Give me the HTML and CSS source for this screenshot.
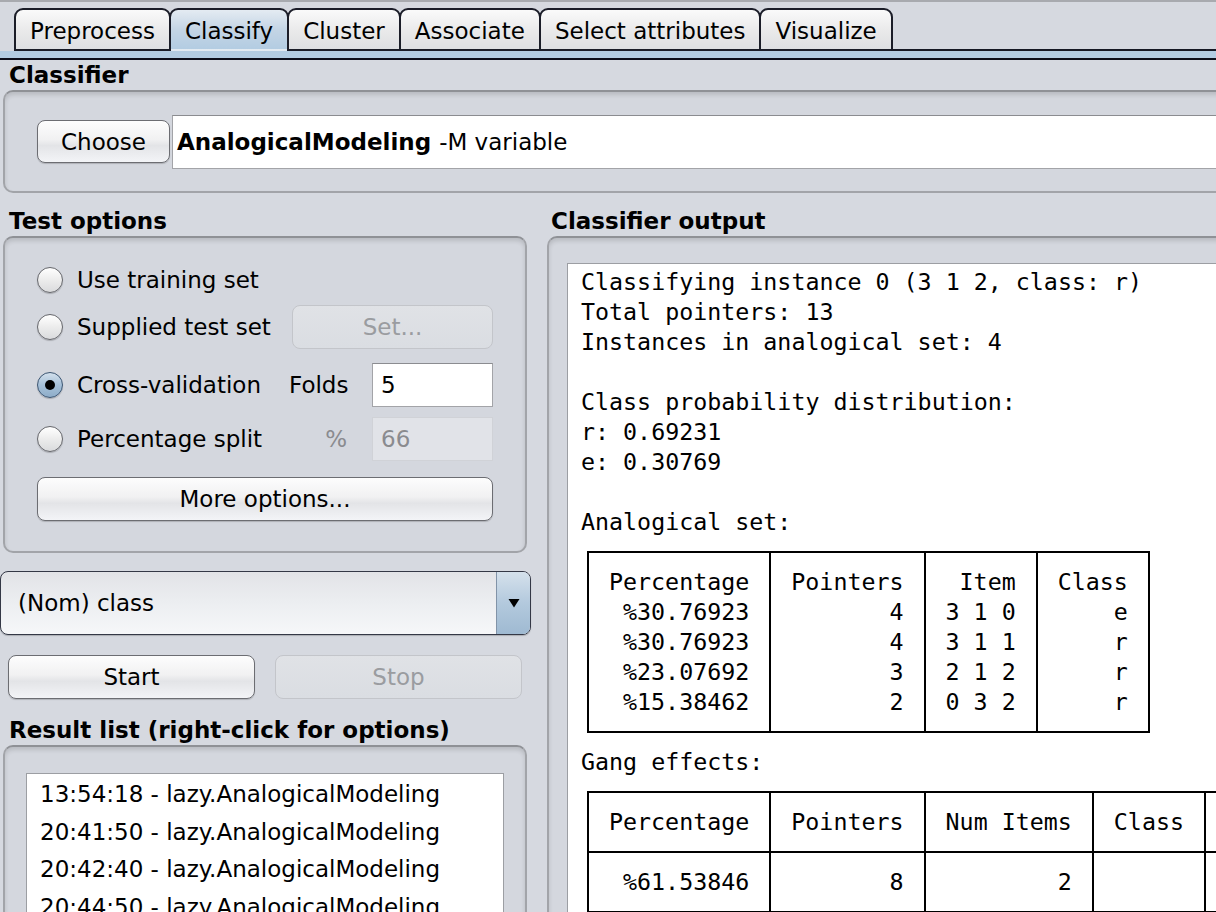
FILE: index.html
```html
<!DOCTYPE html>
<html>
<head>
<meta charset="utf-8">
<title>Weka Explorer - Classify</title>
<link rel="stylesheet" href="styles.css">
</head>
<body>
<div class="window">
  <div class="tabs">
    <div class="tab">Preprocess</div>
    <div class="tab sel">Classify</div>
    <div class="tab">Cluster</div>
    <div class="tab">Associate</div>
    <div class="tab">Select attributes</div>
    <div class="tab">Visualize</div>
  </div>
  <div class="strip"></div>

  <div class="title t-classifier">Classifier</div>
  <div class="panel classifier">
    <div class="btn choose">Choose</div>
    <div class="field cfield"><b>AnalogicalModeling</b> -M variable</div>
  </div>

  <div class="main">
    <div class="left">
      <div class="title">Test options</div>
      <div class="panel testopts">
        <div class="opt-row">
          <div class="opt"><span class="radio"></span><span>Use training set</span></div>
        </div>
        <div class="opt-row g2">
          <div class="opt"><span class="radio"></span><span>Supplied test set</span></div>
          <div class="btn disabled setbtn">Set...</div>
        </div>
        <div class="opt-row g3">
          <div class="opt"><span class="radio on"></span><span>Cross-validation</span></div>
          <div class="lbl">Folds</div>
          <div class="field small">5</div>
        </div>
        <div class="opt-row g4">
          <div class="opt"><span class="radio"></span><span>Percentage split</span></div>
          <div class="lbl dim">%</div>
          <div class="field small off">66</div>
        </div>
        <div class="opt-row g5">
          <div class="btn more">More options...</div>
        </div>
      </div>

      <div class="combo">
        <div class="val">(Nom) class</div>
        <div class="arrow">
          <svg width="12" height="10" viewBox="0 0 12 10"><path d="M0.5 1 L11.5 1 L6 9.5 Z" fill="#000"/></svg>
        </div>
      </div>

      <div class="actions">
        <div class="btn act">Start</div>
        <div class="btn act disabled">Stop</div>
      </div>

      <div class="title t-result">Result list (right-click for options)</div>
      <div class="panel results">
        <div class="list">
          <div class="item">13:54:18 - lazy.AnalogicalModeling</div>
          <div class="item">20:41:50 - lazy.AnalogicalModeling</div>
          <div class="item">20:42:40 - lazy.AnalogicalModeling</div>
          <div class="item">20:44:50 - lazy.AnalogicalModeling</div>
        </div>
      </div>
    </div>

    <div class="right">
      <div class="title t-output">Classifier output</div>
      <div class="panel output">
        <div class="out">
          <div class="ln">Classifying instance 0 (3 1 2, class: r)</div>
          <div class="ln">Total pointers: 13</div>
          <div class="ln">Instances in analogical set: 4</div>
          <div class="ln"> </div>
          <div class="ln">Class probability distribution:</div>
          <div class="ln">r: 0.69231</div>
          <div class="ln">e: 0.30769</div>
          <div class="ln"> </div>
          <div class="ln">Analogical set:</div>
          <div class="tbl t1">
            <div class="c w12"><div>Percentage</div><div>%30.76923</div><div>%30.76923</div><div>%23.07692</div><div>%15.38462</div></div>
            <div class="c w10"><div>Pointers</div><div>4</div><div>4</div><div>3</div><div>2</div></div>
            <div class="c w7"><div>Item</div><div>3 1 0</div><div>3 1 1</div><div>2 1 2</div><div>0 3 2</div></div>
            <div class="c w7 last"><div>Class</div><div>e</div><div>r</div><div>r</div><div>r</div></div>
          </div>
          <div class="ln">Gang effects:</div>
          <div class="tbl t2">
            <div class="c w12 hd">Percentage</div>
            <div class="c w10 hd">Pointers</div>
            <div class="c w11 hd">Num Items</div>
            <div class="c w7 hd">Class</div>
            <div class="c w10 hd"> </div>
            <div class="c w12">%61.53846</div>
            <div class="c w10">8</div>
            <div class="c w11">2</div>
            <div class="c w7"> </div>
            <div class="c w10"> </div>
          </div>
        </div>
      </div>
    </div>
  </div>
</div>
</body>
</html>
```
FILE: styles.css
```css
html, body {
  margin: 0;
  padding: 0;
}
body {
  width: 1216px;
  height: 912px;
  overflow: hidden;
  background: #d6d9e0;
  font-family: "DejaVu Sans", "Liberation Sans", sans-serif;
  font-size: 23px;
  color: #000;
}
.window {
  border-top: 2px solid #a8aaaf;
  width: 1216px;
  height: 910px;
  overflow: hidden;
}

/* ---------- tabs ---------- */
.tabs {
  display: flex;
  margin-top: 6px;
  padding-left: 14px;
  height: 43px;
}
.tabs::after {
  content: "";
  flex: 1;
  border-bottom: 2px solid #161824;
  margin-left: -2px;
}
.tab {
  box-sizing: border-box;
  height: 43px;
  padding: 2px 14px 0;
  display: flex;
  align-items: center;
  border: 2px solid #1b1d28;
  border-radius: 9px 9px 0 0;
  background: linear-gradient(#fafafa, #e9e9ea 55%, #dedfe2);
  white-space: nowrap;
}
.tab + .tab {
  margin-left: -2px;
}
.tab.sel {
  border-bottom-color: transparent;
  background: linear-gradient(#e4ebf2, #c4d5e5 50%, #b3cce2);
}
.strip {
  height: 7px;
  background: #b3cce2;
  border-bottom: 2px solid #0c0e1a;
}

/* ---------- titles & panels ---------- */
.title {
  font-weight: bold;
  height: 30px;
  line-height: 30px;
  padding-left: 9px;
  white-space: nowrap;
}
.title.t-output {
  padding-left: 4px;
}
.panel {
  box-sizing: border-box;
  border: 2px solid #a2a4a9;
  border-top-color: #8f9196;
  border-radius: 10px;
  background: #d4d7de;
  box-shadow: inset 0 3px 4px rgba(0, 0, 0, 0.13);
  margin-left: 3px;
}

.classifier {
  width: 1280px;
  height: 103px;
  display: flex;
  align-items: center;
  padding-left: 32px;
}

/* ---------- buttons ---------- */
.btn {
  box-sizing: border-box;
  display: flex;
  align-items: center;
  justify-content: center;
  height: 44px;
  border: 1.5px solid #6c6d72;
  border-radius: 8px;
  background: linear-gradient(#fdfdfd, #f1f1f2 45%, #e3e4e7 60%, #f3f4f7);
  box-shadow: 0 1px 1px rgba(0, 0, 0, 0.18);
  white-space: nowrap;
}
.btn.disabled {
  border-color: #c3c5ca;
  background: linear-gradient(#e0e2e6, #dadde2);
  color: #9a9ca0;
  box-shadow: none;
}
.choose {
  width: 133px;
  height: 43px;
}

/* ---------- fields ---------- */
.field {
  box-sizing: border-box;
  background: #fff;
  border: 1px solid #a3a4a8;
  border-top-color: #8b8c90;
  display: flex;
  align-items: center;
  white-space: nowrap;
}
.cfield {
  flex: 1;
  height: 54px;
  margin-left: 2px;
  padding-left: 4px;
}
.cfield b {
  margin-right: 8px;
}
.field.small {
  width: 121px;
  height: 44px;
  padding-left: 8px;
}
.field.off {
  background: #e1e3e8;
  border-color: #d0d2d7;
  color: #8a8b8f;
}

/* ---------- main area ---------- */
.main {
  display: flex;
  margin-top: 13px;
}
.left {
  width: 531px;
  flex: none;
}
.right {
  width: 720px;
  flex: none;
  margin-left: 16px;
}

/* ---------- test options ---------- */
.testopts {
  width: 524px;
  padding: 20px 0 30px 32px;
}
.opt-row {
  display: grid;
  grid-template-columns: 252px 83px 121px;
  height: 44px;
  align-items: center;
}
.opt-row.g2 { margin-top: 3px; }
.opt-row.g3 { margin-top: 14px; }
.opt-row.g4 { margin-top: 10px; }
.opt-row.g5 { margin-top: 16px; }
.opt {
  display: flex;
  align-items: center;
  gap: 14px;
  white-space: nowrap;
}
.setbtn {
  grid-column: 2 / 4;
  margin-left: 3px;
}
.lbl {
  text-align: right;
  padding-right: 25px;
}
.lbl.dim {
  color: #8a8b8f;
}
.more {
  grid-column: 1 / 4;
}

.radio {
  position: relative;
  flex: none;
  box-sizing: border-box;
  width: 26px;
  height: 26px;
  border-radius: 50%;
  border: 1.5px solid #66676c;
  background: linear-gradient(#ffffff, #ececec 50%, #dadbdd);
  box-shadow: 0 1px 1px rgba(0, 0, 0, 0.2);
}
.radio.on {
  border-color: #3c5673;
  background: linear-gradient(#d3e0ec, #a6c0d8 50%, #8eadc9);
}
.radio.on::after {
  content: "";
  position: absolute;
  left: 50%;
  top: 50%;
  width: 10px;
  height: 10px;
  margin: -5px 0 0 -5px;
  border-radius: 50%;
  background: #000;
}

/* ---------- combo ---------- */
.combo {
  box-sizing: border-box;
  margin-top: 18px;
  height: 64px;
  width: 531px;
  display: flex;
  border: 1.5px solid #343846;
  border-radius: 8px;
  background: linear-gradient(#e2e3e7, #eceef1 50%, #f6f7f9);
  box-shadow: 0 1px 1px rgba(0, 0, 0, 0.2);
}
.combo .val {
  flex: 1;
  display: flex;
  align-items: center;
  padding-left: 17px;
}
.combo .arrow {
  width: 33px;
  border-left: 1px solid #8193a8;
  border-radius: 0 7px 7px 0;
  background: linear-gradient(#d5e1ec, #b3c9dd 50%, #9fbad2);
  display: flex;
  align-items: center;
  justify-content: center;
}

/* ---------- start/stop ---------- */
.actions {
  display: flex;
  gap: 20px;
  margin-top: 20px;
  padding-left: 8px;
}
.act {
  width: 247px;
}

.t-result {
  margin-top: 16px;
}
.results {
  width: 524px;
  height: 300px;
  padding: 26px 0 0 21px;
}
.list {
  box-sizing: border-box;
  width: 478px;
  height: 260px;
  background: #fff;
  border: 1px solid #9c9ea3;
  padding-top: 2px;
}
.item {
  height: 37.5px;
  line-height: 37.5px;
  padding-left: 13px;
  white-space: nowrap;
}

/* ---------- output ---------- */
.output {
  margin-left: 0;
  height: 720px;
  padding: 25px 0 0 18px;
}
.out {
  box-sizing: border-box;
  height: 700px;
  background: #fff;
  border: 1px solid #9c9ea3;
  border-right: none;
  padding: 3px 0 0 13px;
  font-family: "DejaVu Sans Mono", "Liberation Mono", monospace;
  font-size: 23.3px;
  line-height: 30px;
  overflow: hidden;
}
.ln {
  height: 30px;
  white-space: pre;
}
.tbl {
  display: inline-flex;
  margin: 14px 0 14px calc(0.5ch - 1px);
  border: 2px solid #000;
  vertical-align: top;
}
.c {
  white-space: pre;
  text-align: right;
  padding: 14px calc(1.5ch - 1px) 14px calc(0.5ch - 1px);
  border-right: 2px solid #000;
}
.t1 .c.last {
  border-right: none;
}
.w12 { width: 11ch; }
.w11 { width: 10ch; }
.w10 { width: 9ch; }
.w7 { width: 6ch; }

.t2 {
  display: grid;
  width: max-content;
  grid-template-columns: repeat(5, auto);
}
.t2 .hd {
  border-bottom: 2px solid #000;
}
```
